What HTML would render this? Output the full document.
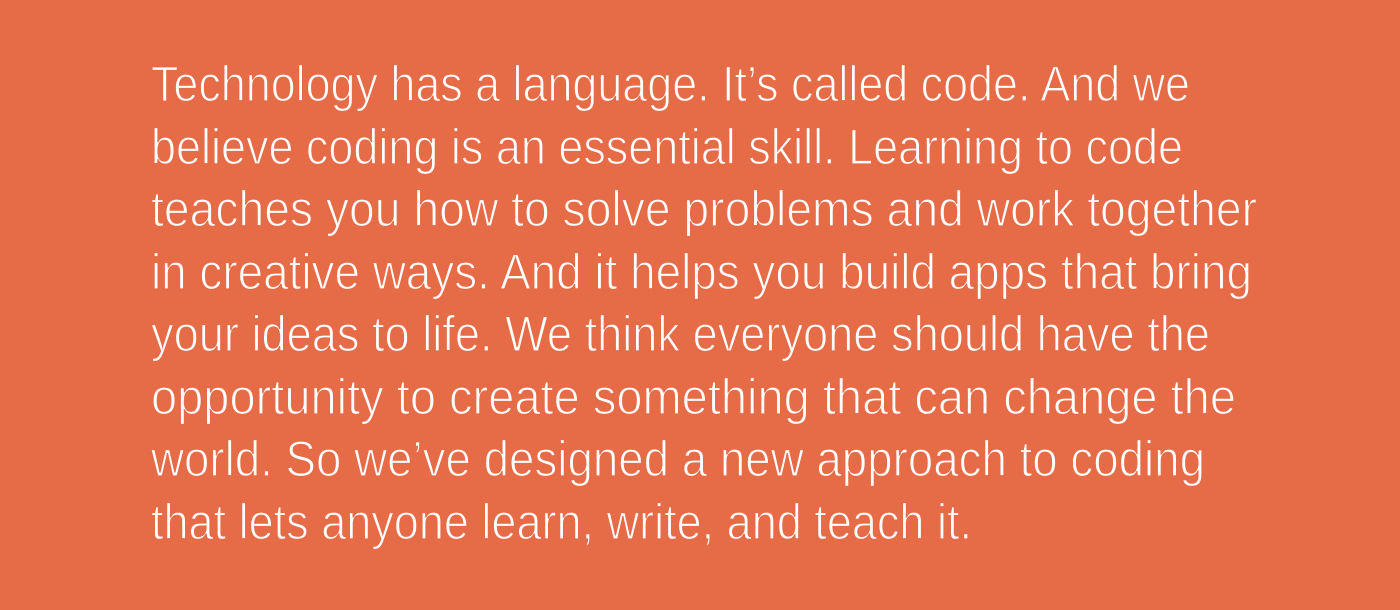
<!DOCTYPE html>
<html><head><meta charset="utf-8"><style>
html,body{margin:0;padding:0;background:#E66B47;width:1400px;height:610px;overflow:hidden}
svg{display:block}
text{font-family:"Liberation Sans",sans-serif;font-size:50px;fill:#fff;stroke:#E66B47;stroke-width:1.3px}
</style></head><body>
<svg width="1400" height="610" viewBox="0 0 1400 610">
<rect width="1400" height="610" fill="#E66B47"/>
<text x="151" y="101" textLength="1039" lengthAdjust="spacingAndGlyphs">Technology has a language. It’s called code. And we</text>
<text x="151" y="164" textLength="1032" lengthAdjust="spacingAndGlyphs">believe coding is an essential skill. Learning to code</text>
<text x="151" y="226" textLength="1106" lengthAdjust="spacingAndGlyphs">teaches you how to solve problems and work together</text>
<text x="151" y="289" textLength="1101" lengthAdjust="spacingAndGlyphs">in creative ways. And it helps you build apps that bring</text>
<text x="151" y="351" textLength="1059" lengthAdjust="spacingAndGlyphs">your ideas to life. We think everyone should have the</text>
<text x="151" y="414" textLength="1085" lengthAdjust="spacingAndGlyphs">opportunity to create something that can change the</text>
<text x="151" y="476" textLength="1054" lengthAdjust="spacingAndGlyphs">world. So we’ve designed a new approach to coding</text>
<text x="151" y="539" textLength="821" lengthAdjust="spacingAndGlyphs">that lets anyone learn, write, and teach it.</text>
</svg>
</body></html>
